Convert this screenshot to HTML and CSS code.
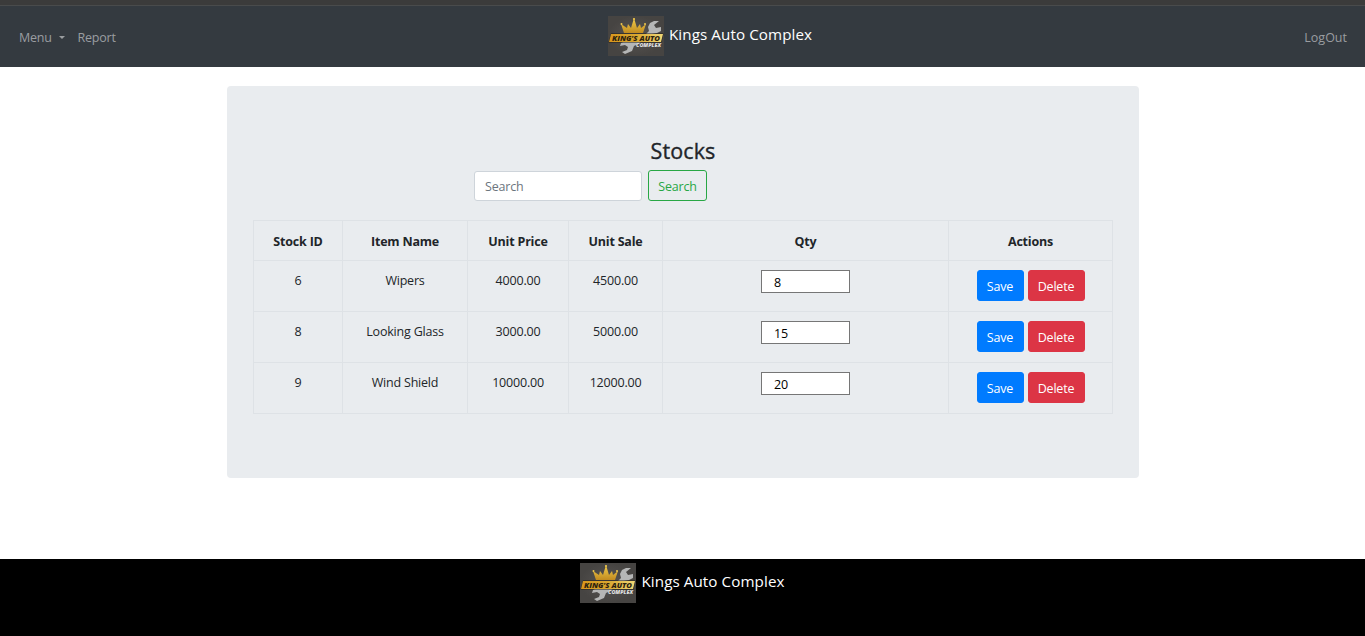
FILE: index.html
```html
<!DOCTYPE html>
<html lang="en">
<head>
<meta charset="utf-8">
<title>Kings Auto Complex</title>
<link rel="stylesheet" href="styles.css">
</head>
<body>
<svg class="defs" width="0" height="0" aria-hidden="true">
  <defs>
    <linearGradient id="gold" x1="0" y1="0" x2="0" y2="1"><stop offset="0" stop-color="#f3cf4c"/><stop offset="1" stop-color="#c18b20"/></linearGradient>
    <linearGradient id="band" x1="0" y1="0" x2="1" y2="0"><stop offset="0" stop-color="#d9971c"/><stop offset=".5" stop-color="#d9a62f"/><stop offset="1" stop-color="#f0d877"/></linearGradient>
    <radialGradient id="plate"><stop offset="0" stop-color="#585553"/><stop offset="1" stop-color="#464442"/></radialGradient>
    <symbol id="logo" viewBox="0 0 56 40">
      <rect width="56" height="40" fill="url(#plate)"/>
      <path d="M37 19L41 15L40 11L42 7L46 5L51 5L46 9L48 12L53 11L53 15L49 17L44 18L30 28L26 30L24 35L17 38L14 36L19 34L20 31L17 29L12 30L13 27L17 25L24 25Z" fill="#b5b6b6"/>
      <path d="M16 17L13 8L19 12L20 8L23 12L26 2L29 12L32 8L33 12L38 8L35 17Z" fill="url(#gold)"/>
      <circle cx="13.500" cy="8" r="1" fill="#efc74a"/><circle cx="26" cy="3" r="1.100" fill="#efc74a"/><circle cx="37" cy="8" r="1" fill="#efc74a"/>
      <path d="M3 17.500H55.500L53.500 26.500H.500Z" fill="#201c18"/>
      <path d="M3 18H55L53 26H1Z" fill="url(#band)"/>
      <text x="4" y="24.500" textLength="48" lengthAdjust="spacingAndGlyphs" class="logo-name">KING'S AUTO</text>
      <text x="28" y="30.500" textLength="25" lengthAdjust="spacingAndGlyphs" class="logo-sub">COMPLEX</text>
    </symbol>
  </defs>
</svg>
<header class="navbar">
  <nav class="nav-left"><a class="menu">Menu<span class="caret"></span></a><a class="report">Report</a></nav>
  <div class="brand"><svg class="logo"><use href="#logo"/></svg><span>Kings Auto Complex</span></div>
  <a class="logout">LogOut</a>
</header>
<main class="panel">
  <h1>Stocks</h1>
  <form class="search"><input class="search-input" type="text" placeholder="Search"><button class="btn outline" type="button">Search</button></form>
  <table>
    <colgroup><col class="c-id"><col class="c-name"><col class="c-price"><col class="c-sale"><col class="c-qty"><col class="c-actions"></colgroup>
    <thead><tr><th>Stock ID</th><th>Item Name</th><th>Unit Price</th><th>Unit Sale</th><th>Qty</th><th>Actions</th></tr></thead>
    <tbody>
      <tr><td>6</td><td>Wipers</td><td>4000.00</td><td>4500.00</td><td class="controls"><input class="qty" value="8"></td><td class="controls"><div class="actions"><button class="btn save">Save</button><button class="btn delete">Delete</button></div></td></tr>
      <tr><td>8</td><td>Looking Glass</td><td>3000.00</td><td>5000.00</td><td class="controls"><input class="qty" value="15"></td><td class="controls"><div class="actions"><button class="btn save">Save</button><button class="btn delete">Delete</button></div></td></tr>
      <tr><td>9</td><td>Wind Shield</td><td>10000.00</td><td>12000.00</td><td class="controls"><input class="qty" value="20"></td><td class="controls"><div class="actions"><button class="btn save">Save</button><button class="btn delete">Delete</button></div></td></tr>
    </tbody>
  </table>
</main>
<footer class="footer"><div class="brand"><svg class="logo"><use href="#logo"/></svg><span>Kings Auto Complex</span></div></footer>
</body>
</html>
```
FILE: styles.css
```css
* { box-sizing: border-box; }
body { margin: 0; height: 636px; display: flex; flex-direction: column; overflow: hidden; background: #fff; color: #212529; font: 12.5px/19px "Open Sans", "Noto Sans", sans-serif; letter-spacing: -.2px; }
.defs { position: absolute; }
.navbar { height: 67px; flex: none; padding: 10px 18px 0 19px; border-top: 5px solid #3b3b3b; box-shadow: inset 0 1px #494b4c; background: #343a40; display: flex; align-items: flex-start; justify-content: space-between; color: #9a9da0; }
.nav-left { display: flex; padding-top: 13px; }
.menu { display: flex; align-items: center; width: 58.500px; }
.caret { margin-left: 7px; border: 3px solid transparent; border-top-color: currentColor; border-bottom: 0; }
.logout { padding-top: 13px; letter-spacing: 0; }
.brand { display: flex; gap: 5px; color: #fff; font-size: 15.2px; line-height: 36px; letter-spacing: .08px; white-space: nowrap; }
.navbar .brand { padding-top: 1px; }
.logo { width: 56px; height: 40px; display: block; }
.logo-name { font: italic 800 7px "Open Sans", sans-serif; letter-spacing: 0; fill: #30240e; }
.logo-sub { font: italic 800 5px "Open Sans", sans-serif; letter-spacing: 0; fill: #dedede; }
.panel { width: 912px; height: 392px; flex: none; margin: 19px 0 0 227px; padding: 51px 26px 0; background: #e9ecef; border-radius: 4px; }
h1 { margin: 0; font-size: 21.5px; line-height: 28px; font-weight: 500; -webkit-text-stroke: .35px currentColor; letter-spacing: .1px; text-align: center; }
.search { display: flex; align-items: flex-end; gap: 6px; margin: 5px 0 19px 221px; height: 31px; }
input, button { font: inherit; letter-spacing: inherit; }
.search-input { width: 168px; height: 30px; padding: 0 10px; border: 1px solid #ced4da; border-radius: 3px; background: #fff; }
.search-input::placeholder { color: #6c757d; opacity: 1; }
.btn { height: 31px; padding: 2px 0 0; border: 1px solid; border-radius: 3px; text-align: center; }
.outline { width: 59px; color: #28a745; border-color: #28a745; background: transparent; }
table { width: 859px; border-collapse: collapse; table-layout: fixed; text-align: center; }
.c-id { width: 89px; }
.c-name { width: 125px; }
.c-price { width: 101px; }
.c-sale { width: 94px; }
.c-qty { width: 286px; }
.c-actions { width: 164px; }
th, td { border: 1px solid #dee2e6; padding: 10px 0 0; vertical-align: top; }
th { height: 40px; padding-top: 11px; font-weight: 700; }
td { height: 51px; }
.controls { padding-top: 9px; }
.qty { display: block; width: 89px; height: 23px; margin: 0 auto; padding: 2px 12px 0; border: 1px solid #767676; border-radius: 0; background: #fff; color: #000; }
.actions { display: flex; justify-content: center; gap: 4px; }
.save { width: 47px; color: #fff; background: #007bff; border-color: #007bff; }
.delete { width: 57px; color: #fff; background: #dc3545; border-color: #dc3545; }
.footer { margin-top: auto; height: 77px; padding-top: 4px; background: #000; display: flex; justify-content: center; }
```
